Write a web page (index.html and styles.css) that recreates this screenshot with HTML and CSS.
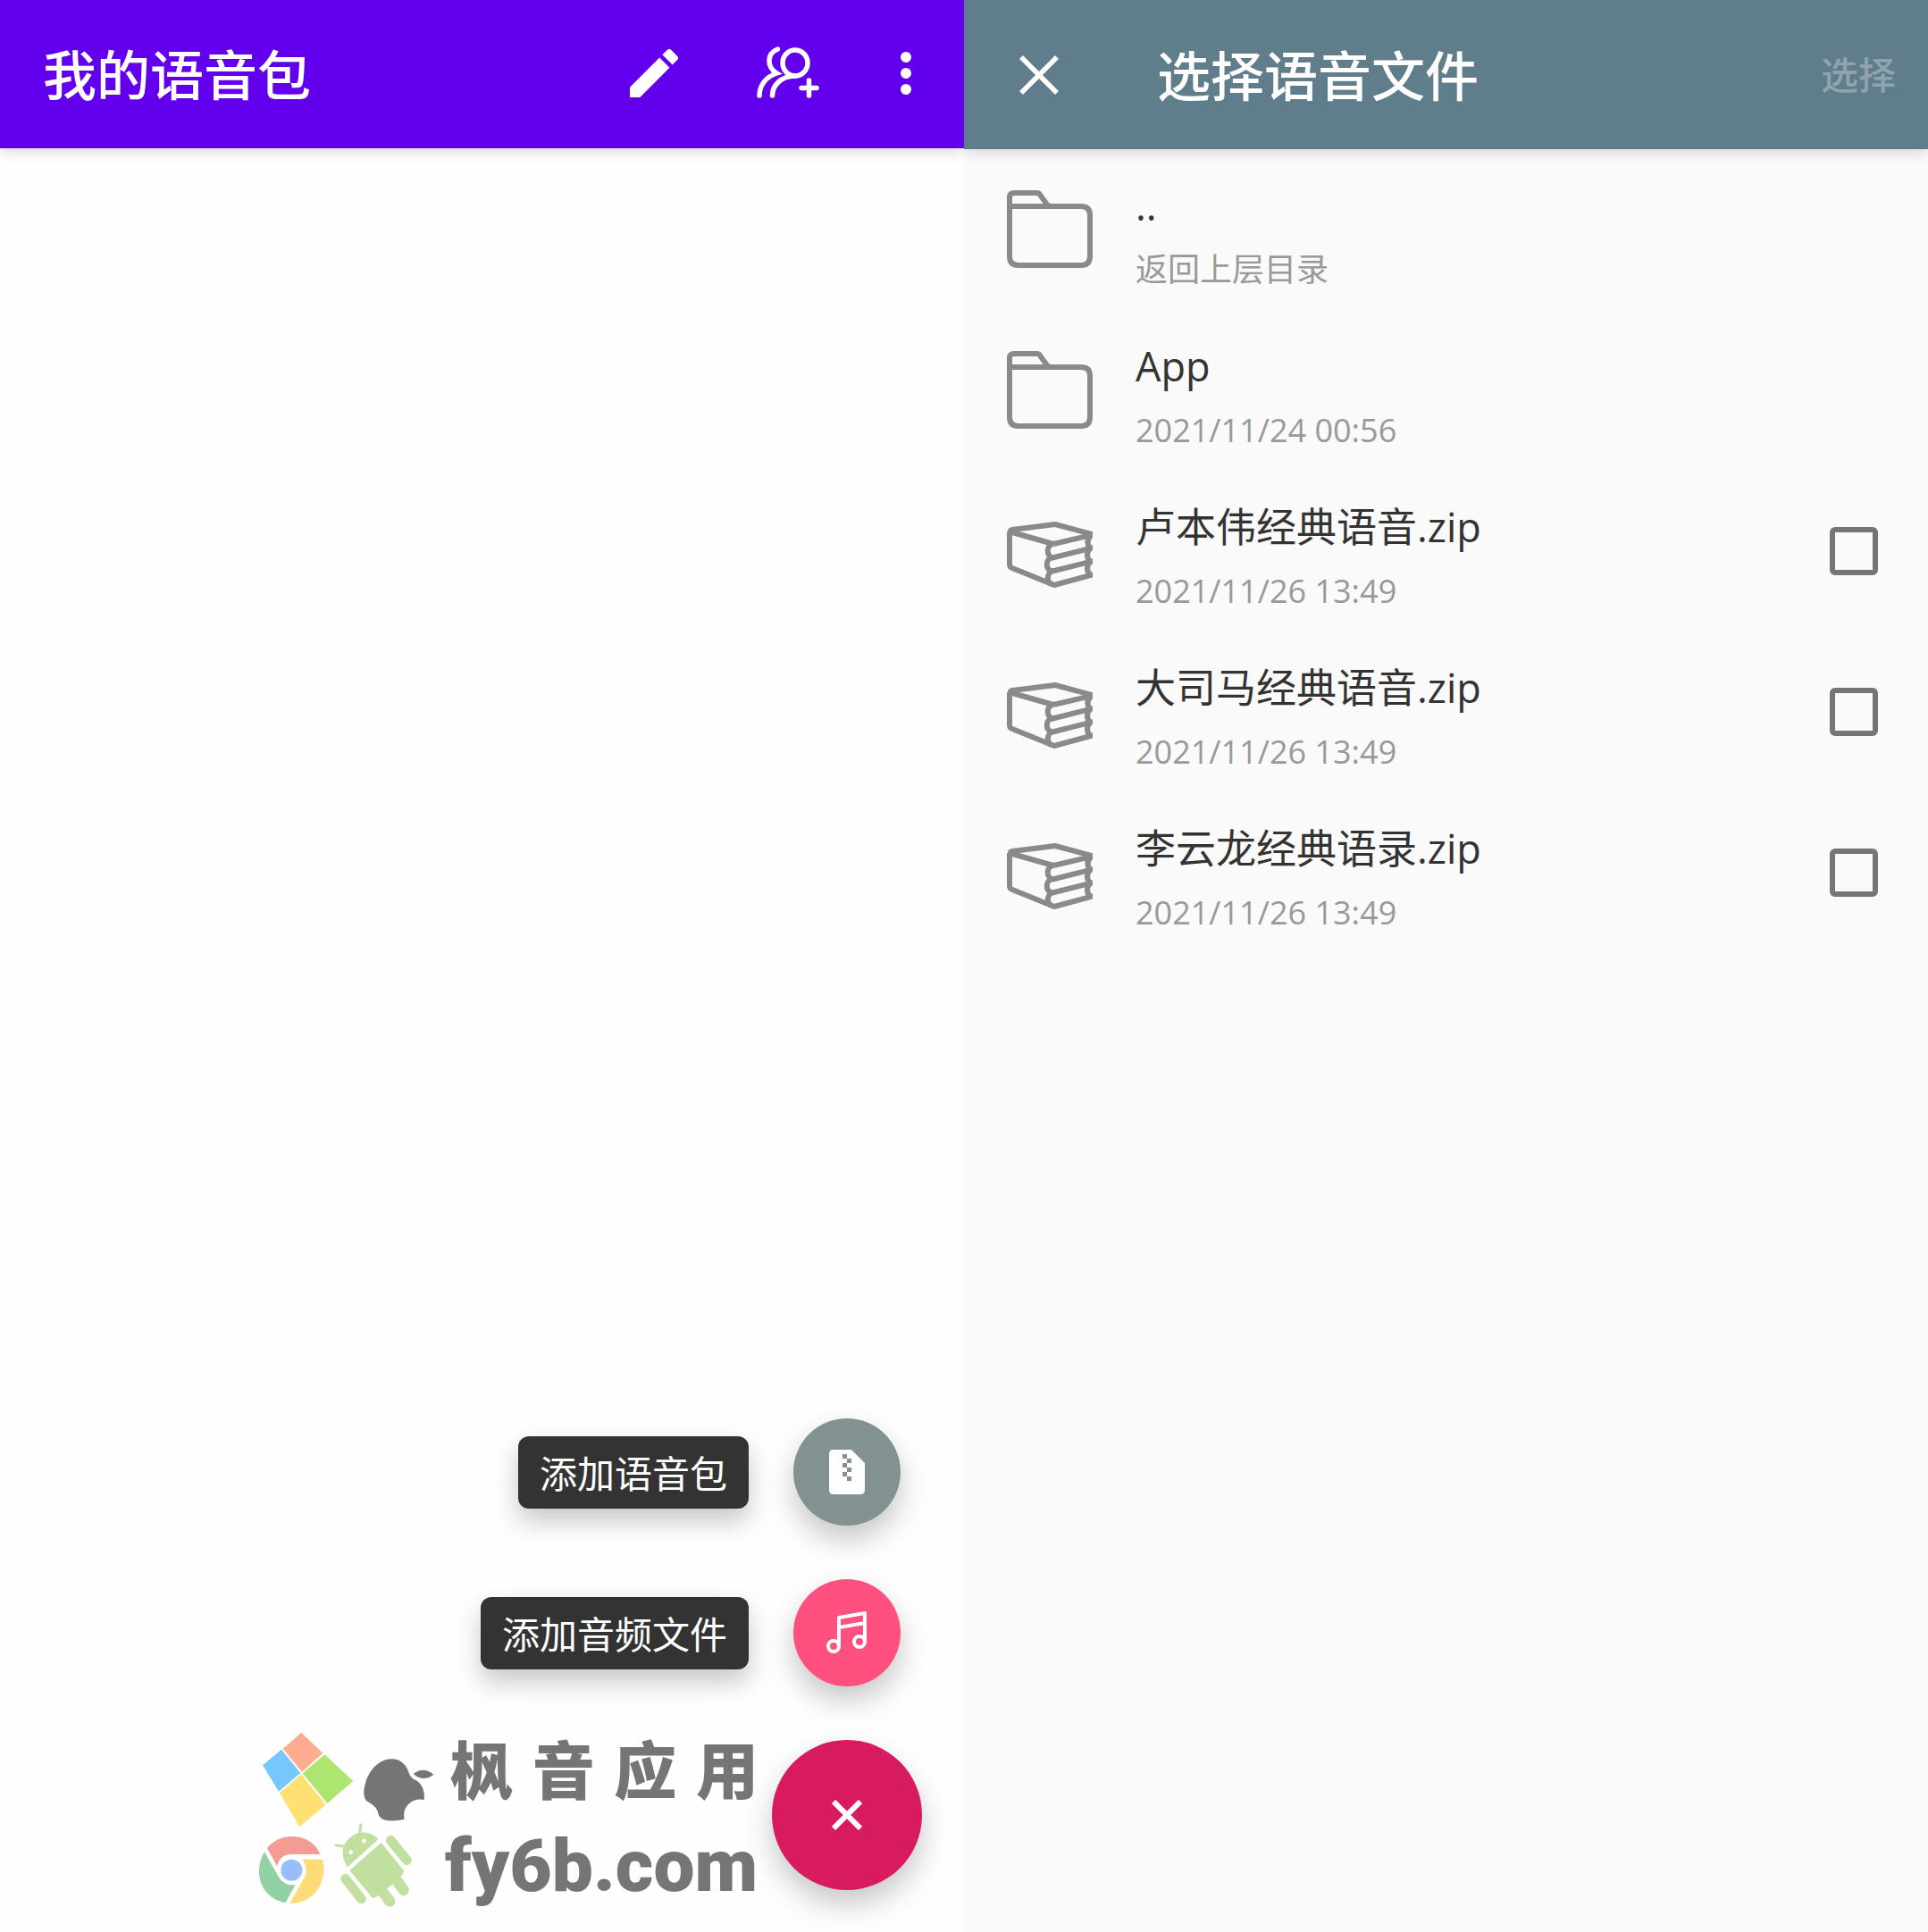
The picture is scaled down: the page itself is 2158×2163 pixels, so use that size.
FILE: index.html
```html
<!DOCTYPE html>
<html lang="zh-CN">
<head>
    <meta charset="UTF-8">
    <meta name="viewport" content="width=device-width, initial-scale=1.0">
    <title>我的语音包</title>
    <link rel="stylesheet" href="styles.css">
</head>
<body>

<!-- shared icons for the file list -->
<svg class="symbols" aria-hidden="true">
    <symbol id="folder" viewBox="0 0 96 96">
        <g fill="none" stroke="#8a8a8a" stroke-width="6" stroke-linejoin="round">
            <path d="M3 22V12Q3 7 8 7H34Q36 7 37 9L45 20Q47 22 50 22"/>
            <path d="M3 22H83Q93 22 93 32V78Q93 88 83 88H13Q3 88 3 78Z"/>
        </g>
    </symbol>
    <symbol id="books" viewBox="0 0 96 96">
        <g fill="none" stroke="#8a8a8a" stroke-width="6" stroke-linejoin="round">
            <path d="M52 40L6 27Q2 25 6 24L54 18L97 29.500L52 40"/>
            <path d="M3 26V63Q3 66 6 67L53 86L97 74"/>
            <path d="M52 40C44 41 44 52 50 55C43 58 43 68 50 70C45 74 44 82 50 85"/>
            <path d="M49 56L97 44M49 71L97 59"/>
            <path d="M95 30Q87 36 93 45Q87 52 93 60Q87 67 93 75"/>
        </g>
    </symbol>
</svg>

<div class="screens">
    <section class="pane packs">
        <header class="bar bar-purple">
            <h1>我的语音包</h1>
            <div class="actions">
                <button class="icon-btn" aria-label="编辑">
                    <svg width="72" height="72" viewBox="0 0 24 24" fill="#fff"><path d="M3 17.250V21h3.750L17.810 9.940l-3.750-3.750L3 17.250zM20.710 7.040a1 1 0 0 0 0-1.410l-2.340-2.340a1 1 0 0 0-1.410 0l-1.830 1.830 3.750 3.750 1.830-1.830z"/></svg>
                </button>
                <button class="icon-btn" aria-label="添加成员">
                    <svg width="72" height="60" viewBox="0 0 72 60" fill="none" stroke="#fff" stroke-width="5.500" stroke-linecap="round">
                        <ellipse cx="43" cy="18.500" rx="14" ry="14.500"/>
                        <path d="M23.500 3C11 8 11 23 22.500 30C10 34 3 44 3 55"/>
                        <path d="M43 33C27 33 17.500 44 17.500 55"/>
                        <path d="M58.500 38V55M50 46.500H67"/>
                    </svg>
                </button>
                <button class="icon-btn" aria-label="更多">
                    <svg width="12" height="48" viewBox="0 0 12 48" fill="#fff"><circle cx="6" cy="6" r="6"/><circle cx="6" cy="24" r="6"/><circle cx="6" cy="42" r="6"/></svg>
                </button>
            </div>
        </header>

        <div class="watermark">
            <svg class="logos" viewBox="57 57 591 591" aria-hidden="true">
                <!-- windows -->
                <path fill="#ffad91" d="M202 59L274 128L204 191L140 113Z"/>
                <path fill="#77c7ff" d="M135 116L199 195L126 257L72 169Z"/>
                <path fill="#aee571" d="M280 133L376 222L289 297L206 196Z"/>
                <path fill="#ffe173" d="M201 199L284 301L196 376L129 262Z"/>
                <!-- apple -->
                <path fill="#757575" d="M504 148C540 148 555 172 563 194C566 206 575 214 586 219C604 229 618 252 614 285C574 275 538 310 548 350Q524 357 493 355Q466 352 461 334C458 312 440 299 423 290Q412 283 412 262C414 205 452 149 504 148Z"/>
                <path fill="#757575" d="M578 198Q611 171 646 200Q611 227 578 198Z"/>
                <!-- chrome -->
                <path fill="#f49b94" d="M87 448C132 388 238 397 265 468H169C142 468 125 484 121 508Z"/>
                <path fill="#91d1a3" d="M78 460L123 539C134 562 158 575 182 570L149 631C63 613 39 528 78 460Z"/>
                <path fill="#fddb78" d="M205 485H273C293 560 242 636 163 633L207 554C224 531 221 506 205 485Z"/>
                <circle cx="169" cy="521" r="36" fill="#99bdfa"/>
                <!-- android -->
                <g fill="#c1df9e" stroke="#c1df9e" stroke-linecap="round">
                    <path stroke="none" d="M357 511C325 464 344 414 392 397C420 390 443 400 460 418Z"/>
                    <path stroke-width="9" d="M398 396L401 369M344 441L319 438"/>
                    <path stroke="none" d="M470 429L545 521Q549 529 535 543L560 577Q568 593 557 602Q543 611 531 600L508 568L489 584L514 616Q522 631 510 641Q496 649 484 637L461 605Q449 617 439 613L364 522Z"/>
                    <path stroke-width="32" d="M502 421L556 488M350 550L403 618"/>
                </g>
                <path fill="#fefefe" d="M412 414L421 423L412 432L403 423ZM368 452L377 461L368 470L359 461Z"/>
            </svg>
            <div class="brand">
                <div class="brand-name"><span>枫</span><span>音</span><span>应</span><span>用</span></div>
                <div class="brand-site">fy6b.com</div>
            </div>
        </div>

        <div class="speed-dial">
            <div class="dial-item">
                <label class="dial-label" for="addPack">添加语音包</label>
                <button class="fab fab-gray" id="addPack">
                    <svg width="40" height="50" viewBox="0 0 40 50"><path fill="#fff" fill-rule="evenodd" d="M5 0H25L40 15V45Q40 50 35 50H5Q0 50 0 45V5Q0 0 5 0ZM15 5v5h5v5h-5v5h5v5h-5v5h5v5h5v-5h-5v-5h5v-5h-5v-5h5v-5h-5v-5Z"/></svg>
                </button>
            </div>
            <div class="dial-item">
                <label class="dial-label" for="addAudio">添加音频文件</label>
                <button class="fab fab-pink" id="addAudio">
                    <svg width="46" height="48" viewBox="0 0 46 48" fill="none" stroke="#fff" stroke-width="4" stroke-linejoin="round"><circle cx="8" cy="39" r="6"/><circle cx="37" cy="34" r="6"/><path d="M14 39V7L43 2V34M14 18L43 13"/></svg>
                </button>
            </div>
            <button class="fab fab-main" aria-label="关闭">
                <svg width="34" height="34" viewBox="0 0 34 34" stroke="#fff" stroke-width="6"><path d="M2 2L32 32M32 2L2 32"/></svg>
            </button>
        </div>
    </section>

    <section class="pane files">
        <header class="bar bar-slate">
            <button class="icon-btn close" aria-label="关闭">
                <svg width="44" height="44" viewBox="0 0 44 44" stroke="#fff" stroke-width="5.500"><path d="M2 2L42 42M42 2L2 42"/></svg>
            </button>
            <h1>选择语音文件</h1>
            <button class="choose" disabled>选择</button>
        </header>

        <ul class="file-list">
            <li class="file">
                <svg class="file-icon"><use href="#folder"/></svg>
                <div class="file-text">
                    <div class="file-name">..</div>
                    <div class="file-info">返回上层目录</div>
                </div>
            </li>
            <li class="file">
                <svg class="file-icon"><use href="#folder"/></svg>
                <div class="file-text">
                    <div class="file-name">App</div>
                    <div class="file-info">2021/11/24 00:56</div>
                </div>
            </li>
            <li class="file">
                <svg class="file-icon"><use href="#books"/></svg>
                <label class="file-text" for="file1">
                    <span class="file-name">卢本伟经典语音.zip</span>
                    <span class="file-info">2021/11/26 13:49</span>
                </label>
                <input type="checkbox" id="file1">
            </li>
            <li class="file">
                <svg class="file-icon"><use href="#books"/></svg>
                <label class="file-text" for="file2">
                    <span class="file-name">大司马经典语音.zip</span>
                    <span class="file-info">2021/11/26 13:49</span>
                </label>
                <input type="checkbox" id="file2">
            </li>
            <li class="file">
                <svg class="file-icon"><use href="#books"/></svg>
                <label class="file-text" for="file3">
                    <span class="file-name">李云龙经典语录.zip</span>
                    <span class="file-info">2021/11/26 13:49</span>
                </label>
                <input type="checkbox" id="file3">
            </li>
        </ul>
    </section>
</div>

</body>
</html>
```
FILE: styles.css
```css
* {
    box-sizing: border-box;
}
body {
    font-family: "Open Sans", "Noto Sans CJK SC", sans-serif;
    margin: 0;
    background: #fafafa;
}
button {
    font-family: inherit;
    border: none;
    padding: 0;
    background: none;
    cursor: pointer;
}
svg {
    display: block;
}
.symbols {
    display: none;
}
.screens {
    display: grid;
    grid-template-columns: 1fr 1fr;
    min-height: 100vh;
}
.pane {
    position: relative;
    display: flex;
    flex-direction: column;
    overflow: hidden;
}
.packs {
    background: #fefefe;
}
.files {
    background: #fafafa;
}

/* top bars */
.bar {
    display: flex;
    align-items: center;
    color: #fff;
    box-shadow: 0 4px 14px rgba(0, 0, 0, 0.14);
}
.bar h1 {
    margin: 0;
    padding-top: 2px;
    font-size: 60px;
    font-weight: 500;
    line-height: 72px;
}
.bar-purple {
    height: 166px;
    padding: 0 59px 0 48px;
    justify-content: space-between;
    background: #6200ee;
}
.bar-slate {
    height: 167px;
    padding: 0 36px 0 62px;
    background: #607d8b;
}
.actions {
    display: flex;
    align-items: center;
    padding-bottom: 2px;
}
.actions .icon-btn:nth-child(2) {
    margin: 0 89px 0 79px;
}
.close {
    margin-right: 110px;
}
.choose {
    margin-left: auto;
    font-size: 42px;
    font-weight: 500;
    line-height: 60px;
    color: #90a4ae;
}

/* file list */
.file-list {
    list-style: none;
    margin: 0;
    padding: 0;
}
.file {
    display: flex;
    align-items: center;
    height: 180px;
    padding: 0 56px 0 48px;
}
.file-icon {
    width: 96px;
    height: 96px;
    margin-right: 48px;
}
.file-text {
    flex: 1;
    padding-top: 17px;
}
.file-name,
.file-info {
    display: block;
    line-height: 72px;
}
.file-name {
    font-size: 45px;
    color: #333;
}
.file-info {
    font-size: 36px;
    color: #999;
}
.file input {
    appearance: none;
    width: 54px;
    height: 54px;
    margin: 0;
    border: 6px solid #757575;
    border-radius: 6px;
}

/* floating buttons */
.speed-dial {
    display: flex;
    flex-direction: column;
    align-items: flex-end;
    gap: 60px;
    margin-top: auto;
    padding: 0 47px 47px 0;
}
.dial-item {
    display: flex;
    align-items: center;
    gap: 50px;
    margin-right: 24px;
}
.dial-label {
    padding: 12px 24px 9px;
    border-radius: 12px;
    font-size: 42px;
    line-height: 60px;
    color: #fff;
    background: #333;
    box-shadow: 0 14px 28px rgba(0, 0, 0, 0.22);
}
.fab {
    display: flex;
    align-items: center;
    justify-content: center;
    width: 120px;
    height: 120px;
    border-radius: 50%;
    box-shadow: 0 16px 32px rgba(0, 0, 0, 0.22);
}
.fab-gray {
    background: #819290;
}
.fab-pink {
    background: #ff5080;
}
.fab-main {
    width: 168px;
    height: 168px;
    background: #d81b60;
}

/* site watermark over the empty list */
.watermark {
    position: absolute;
    right: 230px;
    bottom: 10px;
    display: flex;
    gap: 12px;
    color: #757575;
}
.logos {
    width: 197px;
    height: 197px;
}
.brand {
    width: 351px;
}
.brand-name {
    display: flex;
    justify-content: space-between;
    padding-left: 6px;
    font-size: 70px;
    font-weight: 900;
    line-height: 86px;
}
.brand-site {
    font-family: Roboto, sans-serif;
    font-size: 82px;
    font-weight: 900;
    line-height: 128px;
}
```
